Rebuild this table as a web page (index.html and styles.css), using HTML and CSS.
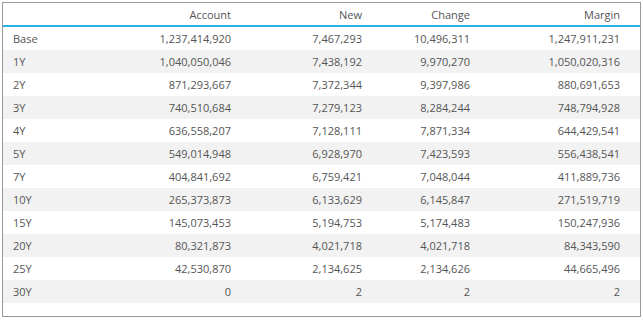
FILE: index.html
```html
<!DOCTYPE html>
<html>
<head>
  <meta charset="UTF-8" />
  <title>Projection Table</title>
  <link rel="stylesheet" href="styles.css">
</head>
<body>

<div class="panel">
  <table class="grid">
    <colgroup>
      <col class="col-label">
      <col class="col-account">
      <col class="col-new">
      <col class="col-change">
      <col class="col-margin">
    </colgroup>
    <thead>
      <tr>
        <th></th>
        <th>Account</th>
        <th>New</th>
        <th>Change</th>
        <th>Margin</th>
      </tr>
    </thead>
    <tbody>
      <tr><td>Base</td><td>1,237,414,920</td><td>7,467,293</td><td>10,496,311</td><td>1,247,911,231</td></tr>
      <tr><td>1Y</td><td>1,040,050,046</td><td>7,438,192</td><td>9,970,270</td><td>1,050,020,316</td></tr>
      <tr><td>2Y</td><td>871,293,667</td><td>7,372,344</td><td>9,397,986</td><td>880,691,653</td></tr>
      <tr><td>3Y</td><td>740,510,684</td><td>7,279,123</td><td>8,284,244</td><td>748,794,928</td></tr>
      <tr><td>4Y</td><td>636,558,207</td><td>7,128,111</td><td>7,871,334</td><td>644,429,541</td></tr>
      <tr><td>5Y</td><td>549,014,948</td><td>6,928,970</td><td>7,423,593</td><td>556,438,541</td></tr>
      <tr><td>7Y</td><td>404,841,692</td><td>6,759,421</td><td>7,048,044</td><td>411,889,736</td></tr>
      <tr><td>10Y</td><td>265,373,873</td><td>6,133,629</td><td>6,145,847</td><td>271,519,719</td></tr>
      <tr><td>15Y</td><td>145,073,453</td><td>5,194,753</td><td>5,174,483</td><td>150,247,936</td></tr>
      <tr><td>20Y</td><td>80,321,873</td><td>4,021,718</td><td>4,021,718</td><td>84,343,590</td></tr>
      <tr><td>25Y</td><td>42,530,870</td><td>2,134,625</td><td>2,134,626</td><td>44,665,496</td></tr>
      <tr><td>30Y</td><td>0</td><td>2</td><td>2</td><td>2</td></tr>
    </tbody>
  </table>
</div>

</body>
</html>
```

FILE: styles.css
```css
body {
  margin: 0;
  padding: 0;
  background-color: #ffffff;
  font-family: 'Open Sans', sans-serif;
  font-size: 11px;
  color: #555555;
}
.panel {
  margin: 2px;
  height: 315px;
  width: 639px;
  border: 1px solid #9a9a9a;
  box-sizing: border-box;
}
.grid {
  border-collapse: collapse;
  table-layout: fixed;
  width: 100%;
}
.col-label   { width: 138px; }
.col-account { width: 100px; }
.col-new     { width: 131px; }
.col-change  { width: 108px; }
.col-margin  { width: 160px; }

th, td {
  padding: 0 10px;
  text-align: right;
  font-weight: normal;
  white-space: nowrap;
}
th {
  height: 22px;
  border-bottom: 2px solid #2cb2e2;
}
td {
  height: 23px;
}
td:first-child {
  text-align: left;
}
th:last-child, td:last-child {
  padding-right: 20px; /* extra room before the panel edge */
}
tbody tr:nth-child(even) td {
  background-color: #f2f2f2;
}
```
